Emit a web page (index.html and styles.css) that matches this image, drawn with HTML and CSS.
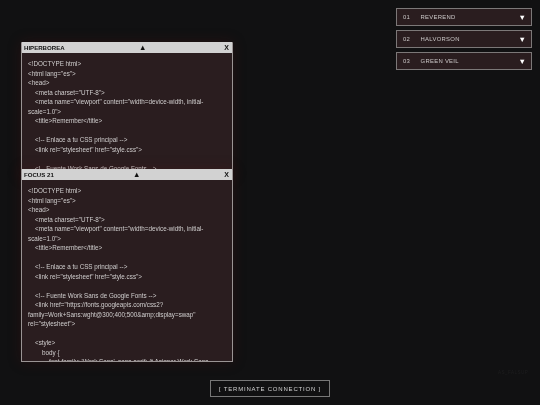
FILE: index.html
```html
<!DOCTYPE html>
<html lang="en">
<head>
<meta charset="utf-8">
<meta name="viewport" content="width=device-width, initial-scale=1">
<title>Terminal</title>
<link rel="stylesheet" href="styles.css">
</head>
<body>

<div class="tracks">
  <div class="track"><span class="num">01</span><span class="name">REVEREND</span><span class="arrow">▼</span></div>
  <div class="track"><span class="num">02</span><span class="name">HALVORSON</span><span class="arrow">▼</span></div>
  <div class="track"><span class="num">03</span><span class="name">GREEN VEIL</span><span class="arrow">▼</span></div>
</div>

<div class="window win1">
  <div class="titlebar"><span class="wtitle">HIPERBOREA</span><span class="up up1">▲</span><span class="x">X</span></div>
  <div class="code">
    <div>&lt;!DOCTYPE html&gt;</div>
    <div>&lt;html lang="es"&gt;</div>
    <div>&lt;head&gt;</div>
    <div class="i1">&lt;meta charset="UTF-8"&gt;</div>
    <div class="i1">&lt;meta name="viewport" content="width=device-width, initial-</div>
    <div>scale=1.0"&gt;</div>
    <div class="i1">&lt;title&gt;Remember&lt;/title&gt;</div>
    <div>&nbsp;</div>
    <div class="i1">&lt;!-- Enlace a tu CSS principal --&gt;</div>
    <div class="i1">&lt;link rel="stylesheet" href="style.css"&gt;</div>
    <div>&nbsp;</div>
    <div class="i1">&lt;!-- Fuente Work Sans de Google Fonts --&gt;</div>
  </div>
</div>

<div class="window win2">
  <div class="titlebar"><span class="wtitle">FOCUS 21</span><span class="up up2">▲</span><span class="x">X</span></div>
  <div class="code">
    <div>&lt;!DOCTYPE html&gt;</div>
    <div>&lt;html lang="es"&gt;</div>
    <div>&lt;head&gt;</div>
    <div class="i1">&lt;meta charset="UTF-8"&gt;</div>
    <div class="i1">&lt;meta name="viewport" content="width=device-width, initial-</div>
    <div>scale=1.0"&gt;</div>
    <div class="i1">&lt;title&gt;Remember&lt;/title&gt;</div>
    <div>&nbsp;</div>
    <div class="i1">&lt;!-- Enlace a tu CSS principal --&gt;</div>
    <div class="i1">&lt;link rel="stylesheet" href="style.css"&gt;</div>
    <div>&nbsp;</div>
    <div class="i1">&lt;!-- Fuente Work Sans de Google Fonts --&gt;</div>
    <div class="i1">&lt;link href="https://fonts.googleapis.com/css2?</div>
    <div>family=Work+Sans:wght@300;400;500&amp;amp;display=swap"</div>
    <div>rel="stylesheet"&gt;</div>
    <div>&nbsp;</div>
    <div class="i1">&lt;style&gt;</div>
    <div class="i2">body {</div>
    <div class="i3">font-family: 'Work Sans', sans-serif; /* Asignar Work Sans</div>
  </div>
</div>

<div class="footer">
  <div class="terminate">[ TERMINATE CONNECTION ]</div>
</div>
<div class="faint">AS_FALSUP</div>

</body>
</html>
```

FILE: styles.css
```css
* {
  box-sizing: border-box;
}

html, body {
  margin: 0;
  height: 100%;
}

html {
  background: #111112;
}

body {
  position: relative;
  width: 540px;
  height: 405px;
  overflow: hidden;
  background: #111112;
  font-family: "Liberation Sans", Arial, sans-serif;
  color: #d0cece;
  filter: blur(0.25px);
}

.tracks {
  position: absolute;
  top: 8px;
  left: 396px;
  width: 136px;
  display: flex;
  flex-direction: column;
  gap: 4px;
}

.track {
  display: flex;
  align-items: center;
  height: 18px;
  padding: 0 5px 0 6px;
  background: #2a1d1f;
  border: 1px solid #7c7878;
  font-size: 5.9px;
  letter-spacing: 0.3px;
  color: #cbc8c8;
}

.num {
  width: 17.5px;
}

.name {
  flex: 1;
}

.arrow {
  font-size: 7.5px;
  color: #ffffff;
  letter-spacing: 0;
}

.window {
  position: absolute;
  left: 21px;
  width: 212px;
  background: #2a1d1f;
  border: 1px solid #9a9494;
  border-top: 0;
  border-radius: 1px 1px 0 0;
  overflow: hidden;
  box-shadow: 0 0 14px rgba(90, 20, 20, 0.25);
}

.win1 {
  top: 42px;
  height: 135px;
}

.win2 {
  top: 169px;
  height: 193px;
}

.titlebar {
  position: relative;
  display: flex;
  justify-content: space-between;
  align-items: center;
  height: 11px;
  padding: 0 3px 0 2px;
  background: #d2d2d2;
  color: #111;
  font-size: 6.1px;
  font-weight: bold;
}

.x {
  font-size: 7px;
}

.up {
  position: absolute;
  top: 2px;
  font-size: 7.5px;
  line-height: 8px;
}

.up1 {
  left: 117px;
}

.up2 {
  left: 111px;
}

.code {
  padding: 6px;
  font-size: 6.3px;
  line-height: 9.5px;
  white-space: nowrap;
}

.i1 {
  padding-left: 7px;
}

.i2 {
  padding-left: 14px;
}

.i3 {
  padding-left: 21px;
}

.footer {
  position: absolute;
  left: 0;
  right: 0;
  top: 380px;
  display: flex;
  justify-content: center;
}

.terminate {
  width: 120px;
  height: 17px;
  line-height: 16px;
  text-align: center;
  border: 1px solid #777;
  font-size: 6px;
  letter-spacing: 0.8px;
  color: #d2d2d2;
}

.faint {
  position: absolute;
  top: 370px;
  left: 498px;
  font-size: 4.5px;
  letter-spacing: 0.5px;
  color: #1e1e1f;
}
```
